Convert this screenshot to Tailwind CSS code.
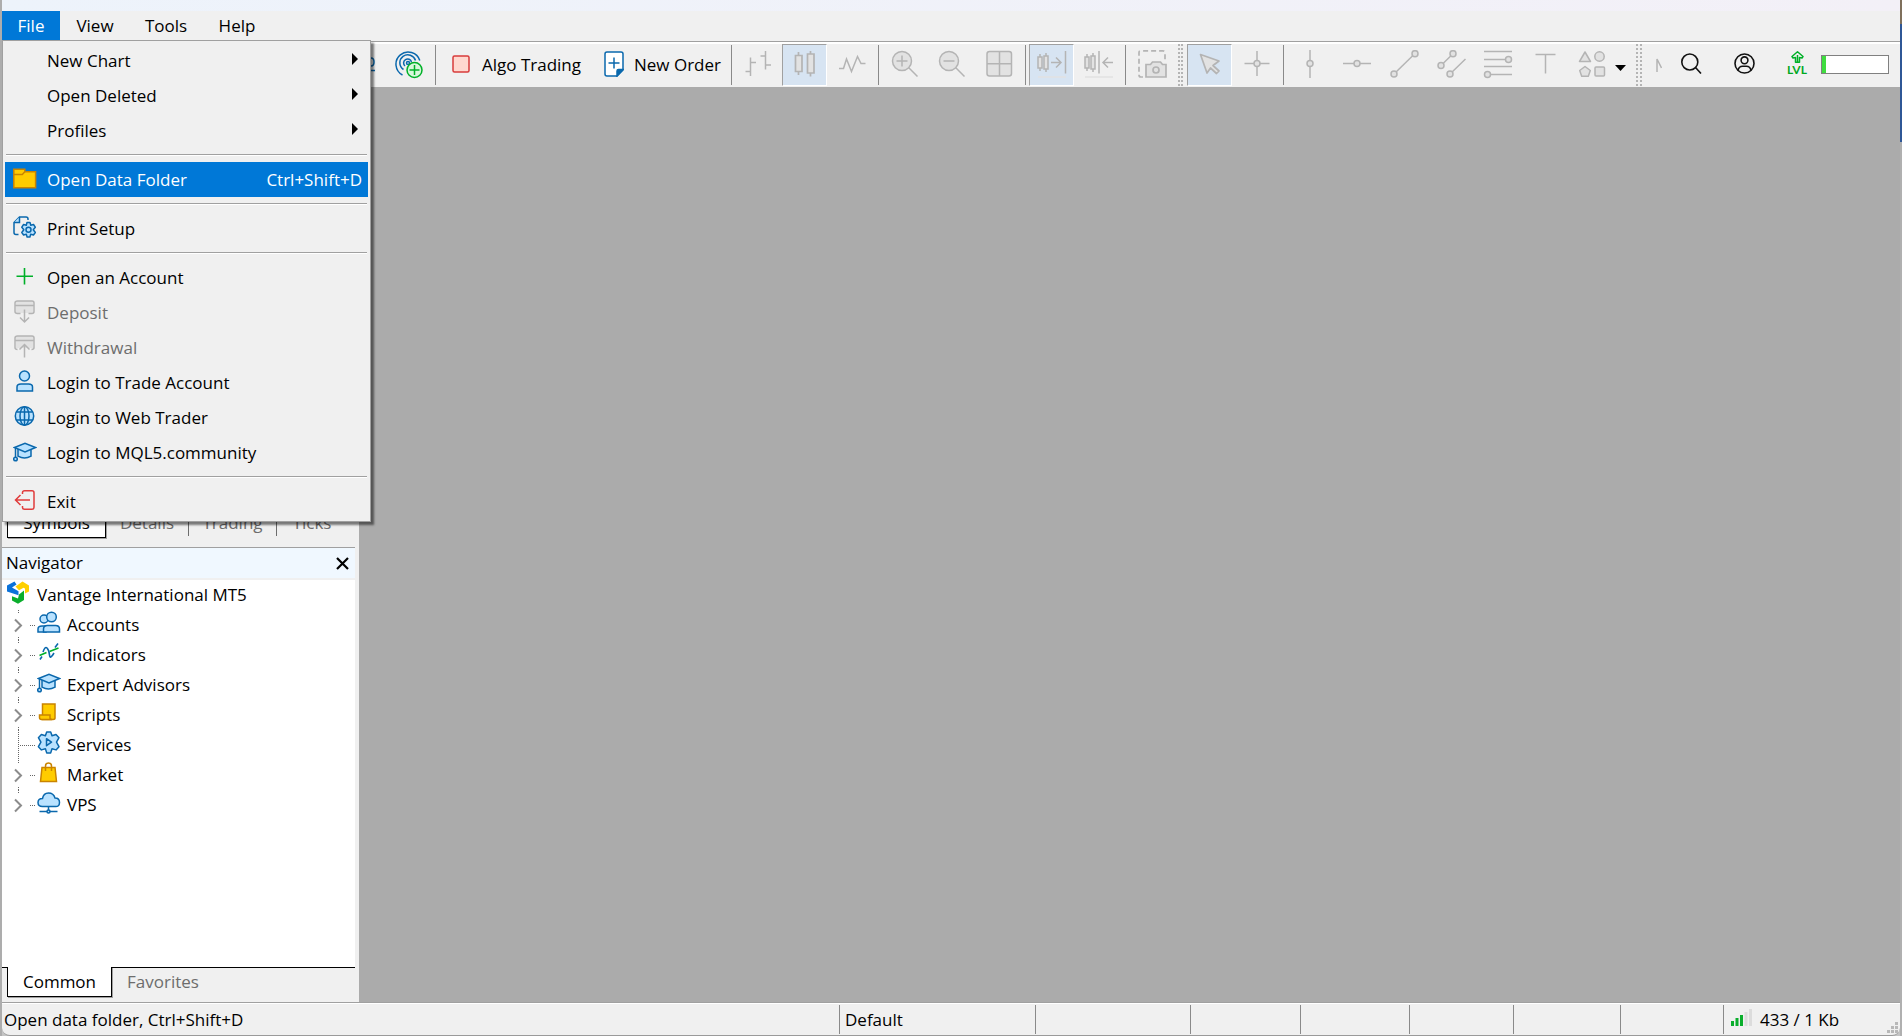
<!DOCTYPE html>
<html lang="en">
<head>
    <meta charset="UTF-8">
    <meta name="viewport" content="width=device-width, initial-scale=1.0">
    <title>Vantage International MT5</title>
    <script src="https://cdn.jsdelivr.net/npm/@tailwindcss/browser@4"></script>
    <style>
        body {
            font-family: 'Open Sans', 'Noto Sans', sans-serif;
        }
    </style>
</head>
<body class="relative flex h-screen flex-col overflow-hidden bg-[#c4c4c4] pl-[2px] pr-[2px] text-[17px] leading-6 text-black">
    <!-- desktop visible past the window edges -->
    <div class="absolute inset-y-0 left-0 w-[2px] bg-[#adadad]"></div>
    <div class="absolute inset-y-0 right-0 flex w-[2px] flex-col bg-[#b0b0b0]">
        <div class="h-6 bg-[#7f705c]"></div>
        <div class="h-[118px] bg-[#2f5796]"></div>
    </div>

    <div class="relative flex min-h-0 flex-1 flex-col overflow-hidden rounded-b-lg border-b border-[#9a9a9a] bg-[#f0f0f0]">
        <div class="h-[11px] shrink-0 bg-linear-to-r from-[#edf3fb] to-[#f3f0f7]"></div>

        <!-- Menu bar -->
        <nav class="relative z-20 flex h-[30px] shrink-0">
            <button class="h-[29px] w-[58px] bg-[#0078d7] pt-px text-white">File</button>
            <button class="h-[29px] w-[70px] pt-px">View</button>
            <button class="h-[29px] w-[72px] pt-px">Tools</button>
            <button class="h-[29px] w-[70px] pt-px">Help</button>

            <!-- File menu -->
            <div role="menu" class="absolute left-0 top-[29px] w-[369px] border border-[#a0a0a0] bg-[#f0f0f0] p-[2px] shadow-[3px_3px_2px_rgba(0,0,0,0.5)]">
                <button role="menuitem" class="flex h-[35px] w-full items-center pl-[42px] pr-[10px]">
                    <span class="flex-1 pt-px text-left">New Chart</span>
                    <svg class="mb-1 h-3 w-[6px]" viewBox="0 0 6 12"><path d="M0 0l6 6-6 6z"/></svg>
                </button>
                <button role="menuitem" class="flex h-[35px] w-full items-center pl-[42px] pr-[10px]">
                    <span class="flex-1 pt-px text-left">Open Deleted</span>
                    <svg class="mb-1 h-3 w-[6px]" viewBox="0 0 6 12"><path d="M0 0l6 6-6 6z"/></svg>
                </button>
                <button role="menuitem" class="flex h-[35px] w-full items-center pl-[42px] pr-[10px]">
                    <span class="flex-1 pt-px text-left">Profiles</span>
                    <svg class="mb-1 h-3 w-[6px]" viewBox="0 0 6 12"><path d="M0 0l6 6-6 6z"/></svg>
                </button>
                <div class="mx-px mb-[6px] mt-[6px] h-[2px] border-b border-t border-b-white border-t-[#a0a0a0]"></div>
                <button role="menuitem" class="flex h-[35px] w-full items-center gap-[10px] bg-[#0078d7] pl-2 pr-[6px] text-white">
                    <svg class="mb-[2px] size-6" viewBox="0 0 24 24" fill="#ffcc00" stroke="#c98400" stroke-width="1.5"><path d="M.8 2.2h11v2.6h10.8v15.9H.8z"/><path d="M.8 7.5h8.5l2.5-2.7"/></svg>
                    <span class="flex-1 pt-px text-left">Open Data Folder</span>
                    <span class="pt-px">Ctrl+Shift+D</span>
                </button>
                <div class="mx-px mb-[6px] mt-[6px] h-[2px] border-b border-t border-b-white border-t-[#a0a0a0]"></div>
                <button role="menuitem" class="flex h-[35px] w-full items-center gap-[10px] pl-2">
                    <svg class="mb-[2px] size-6" viewBox="0 0 24 24" fill="none" stroke="#0a68ad" stroke-width="1.5"><path d="M5.500 18.500H3Q1 18.500 1 16.500V6.500L6.500 1H13q2 0 2 2v1"/><path d="M1 6.500h5.500V1" fill="#b9e2ff"/><path fill="#b9e2ff" stroke-linejoin="round" d="M14 6.500h3l.8 2.700 2.700-.7 1.800 2.700-2 2.500 2 2.800-1.800 2.500-2.800-.7-.8 2.700h-2.800l-.8-2.700-2.700.7-1.800-2.500 2-2.800-2-2.500 1.800-2.700 2.700.7z"/><circle cx="15.500" cy="13.800" r="2.500"/></svg>
                    <span class="pt-px">Print Setup</span>
                </button>
                <div class="mx-px mb-[6px] mt-[6px] h-[2px] border-b border-t border-b-white border-t-[#a0a0a0]"></div>
                <button role="menuitem" class="flex h-[35px] w-full items-center gap-[10px] pl-2">
                    <svg class="mb-[2px] size-6" viewBox="0 0 24 24" stroke="#00b028" stroke-width="1.6"><path d="M11.500 3v16.500M3.500 11.200h16.500"/></svg>
                    <span class="pt-px">Open an Account</span>
                </button>
                <button role="menuitem" disabled class="flex h-[35px] w-full items-center gap-[10px] pl-2 text-[#6d6d6d]">
                    <svg class="mb-[2px] size-6" viewBox="0 0 24 24" fill="none" stroke="#b4b4b4" stroke-width="1.500"><path fill="#e2e2e2" stroke="none" d="M3 1h17v12H3z"/><path d="M7.500 13.500H4.500Q2 13.500 2 11.500V3Q2 1 4.500 1h14.500q2 0 2 2v8.500q0 2-2 2h-3.500M2 5.500h19M11.500 9.500V22M7 17.500l4.500 4.500 4.500-4.500"/></svg>
                    <span class="pt-px">Deposit</span>
                </button>
                <button role="menuitem" disabled class="flex h-[35px] w-full items-center gap-[10px] pl-2 text-[#6d6d6d]">
                    <svg class="mb-[2px] size-6" viewBox="0 0 24 24" fill="none" stroke="#b4b4b4" stroke-width="1.500"><path fill="#e2e2e2" stroke="none" d="M3 1h17v12H3z"/><path d="M4.500 14.500Q2 14.500 2 12.500V3Q2 1 4.500 1h14.500q2 0 2 2v9.500q0 2-2.500 2M2 5.500h19M11.500 9.500V22.500M6.500 14.500l5-5 5 5"/></svg>
                    <span class="pt-px">Withdrawal</span>
                </button>
                <button role="menuitem" class="flex h-[35px] w-full items-center gap-[10px] pl-2">
                    <svg class="mb-[2px] size-6" viewBox="0 0 24 24" fill="#b9e2ff" stroke="#0a68ad" stroke-width="1.500"><circle cx="11.500" cy="6" r="5"/><path d="M4 21v-4q0-3 4-3h7.500q4 0 4 3v4z"/></svg>
                    <span class="pt-px">Login to Trade Account</span>
                </button>
                <button role="menuitem" class="flex h-[35px] w-full items-center gap-[10px] pl-2">
                    <svg class="mb-[2px] size-6" viewBox="0 0 24 24" fill="none" stroke="#0a68ad" stroke-width="1.500"><circle cx="11.500" cy="11" r="9.200" fill="#b9e2ff"/><ellipse cx="11.500" cy="11" rx="4.500" ry="9.200"/><path d="M11.500 2v18M3.500 7h16M3.500 15h16"/></svg>
                    <span class="pt-px">Login to Web Trader</span>
                </button>
                <button role="menuitem" class="flex h-[35px] w-full items-center gap-[10px] pl-2">
                    <svg class="mb-[2px] size-6" viewBox="0 0 24 24" fill="#b9e2ff" stroke="#0a68ad" stroke-width="1.500"><path d="M5 8v8.200q6.500 3.500 13 0V8"/><path d="M1.500 7.500L12 3.200l10.500 4.300L12 12z"/><path d="M2.500 8v9" fill="none"/><circle cx="2.500" cy="19" r="1.800"/></svg>
                    <span class="pt-px">Login to MQL5.community</span>
                </button>
                <div class="mx-px mb-[6px] mt-[6px] h-[2px] border-b border-t border-b-white border-t-[#a0a0a0]"></div>
                <button role="menuitem" class="flex h-[35px] w-full items-center gap-[10px] pl-2">
                    <svg class="mb-[2px] size-6" viewBox="0 0 24 24" fill="none" stroke="#e03c3c" stroke-width="1.500"><path d="M9.500 5V3.500Q9.500 1.800 11.500 1.800H19q2 0 2 2v14.500q0 2-2 2h-7.500q-2 0-2-1.700v-1.500M17 11H3M7.500 6l-5 5 5 5"/></svg>
                    <span class="pt-px">Exit</span>
                </button>
            </div>
        </nav>

        <!-- Toolbar -->
        <div class="relative flex h-[46px] shrink-0 items-center border-t border-[#a0a0a0] pl-[369px] shadow-[inset_0_2px_0_#ffffff]">
            <svg class="h-[30px] w-1" viewBox="0 0 4 30" fill="none" stroke="#0a68ad" stroke-width="1.500"><path d="M0 8q3 0 3 4t-3 4M0 20.500h4"/></svg>
            <button aria-label="Signals" class="ml-[10px] flex h-[42px] w-[47px] items-center justify-center pl-px">
                <svg class="size-[30px]" viewBox="0 0 30 30" fill="none" stroke="#0a68ad" stroke-width="1.500"><path d="M8.500 25A12.200 12.200 0 1 1 25.800 10.500M9.500 19.500A8 8 0 1 1 21.500 10.500M11 16A4 4 0 1 1 17.500 12"/><circle cx="14" cy="13" r="1.500"/><circle cx="20.500" cy="20" r="7.500" stroke="#00b028" fill="#d8f8dc"/><path stroke="#00b028" d="M20.500 15v10M15.500 20h10"/></svg>
            </button>
            <div class="ml-[3px] mr-2 h-10 w-px bg-[#8a8a8a]"></div>
            <button class="flex h-[42px] items-center gap-3 px-2">
                <svg class="mb-[2px] size-[18px]" viewBox="0 0 18 18"><rect x="1" y="1" width="16" height="16" rx="1.500" fill="#ffd8cf" stroke="#d83b3b" stroke-width="1.500"/></svg>
                <span class="w-[102px] whitespace-nowrap pt-px text-left">Algo Trading</span>
            </button>
            <button class="ml-3 flex h-[42px] items-center gap-[10px]">
                <svg class="mb-[2px] h-[26px] w-5" viewBox="0 0 20 26" fill="#fff" stroke="#0a68ad" stroke-width="1.500"><path d="M3 1h14q2 0 2 2v16l-6 6H3q-2 0-2-2V3q0-2 2-2z"/><path d="M19 18.500h-4.500q-1.500 0-1.500 1.500v5z" fill="#0a68ad"/><path d="M10 6.500v11M4.500 12h11"/></svg>
                <span class="w-[88px] whitespace-nowrap pt-px text-left">New Order</span>
            </button>
            <div class="ml-[9px] mr-[2px] h-10 w-px shrink-0 bg-[#8a8a8a]"></div>

            <button aria-label="Bar chart" class="flex h-[42px] w-[47px] shrink-0 items-center justify-center">
                <svg class="size-[30px]" viewBox="0 0 30 30" fill="none" stroke="#b4b4b4" stroke-width="1.500"><path d="M7.500 7.500V26M7.500 12.500H13M2.500 21.500h5M22.500 1v18.500M17.500 6h5M22.500 15h5.500"/></svg>
            </button>
            <button aria-label="Candlesticks" aria-pressed="true" class="mx-px flex h-[42px] w-[45px] shrink-0 items-center justify-center border border-b-white border-l-[#a0a0a0] border-r-white border-t-[#a0a0a0] bg-[#d7e4f2]">
                <svg class="size-[30px]" viewBox="0 0 30 30" fill="#e2e2e2" stroke="#b4b4b4" stroke-width="1.700"><path d="M8.500 2v4M8.500 21v4M20.500 1v3M20.500 23v3.500"/><path d="M5.500 5.500h6.500v16H5.500zM17.500 4h6.500v19h-6.500z"/></svg>
            </button>
            <button aria-label="Line chart" class="flex h-[42px] w-[47px] shrink-0 items-center justify-center">
                <svg class="size-[30px]" viewBox="0 0 30 30" fill="none" stroke="#b4b4b4" stroke-width="1.500"><path d="M2 18.500h4.500L9.500 9l5 12.500 6-15 3.500 7h4.500"/></svg>
            </button>
            <div class="ml-[3px] mr-[2px] h-10 w-px shrink-0 bg-[#8a8a8a]"></div>
            <button aria-label="Zoom in" class="flex h-[42px] w-[47px] shrink-0 items-center justify-center">
                <svg class="size-[30px]" viewBox="0 0 30 30" fill="#e2e2e2" stroke="#b4b4b4" stroke-width="1.500"><circle cx="12" cy="11" r="9.500"/><path d="M12 5.500v11M6.500 11h11M18.800 17.800l8.700 8.700"/></svg>
            </button>
            <button aria-label="Zoom out" class="flex h-[42px] w-[47px] shrink-0 items-center justify-center">
                <svg class="size-[30px]" viewBox="0 0 30 30" fill="#e2e2e2" stroke="#b4b4b4" stroke-width="1.500"><circle cx="12" cy="11" r="9.500"/><path d="M6.500 11h11M18.800 17.800l8.700 8.700"/></svg>
            </button>
            <button aria-label="Tile windows" class="flex h-[42px] w-[47px] shrink-0 items-center justify-center">
                <svg class="size-[30px]" viewBox="0 0 30 30" fill="#e2e2e2" stroke="#b4b4b4" stroke-width="1.500"><rect x="3" y="1.500" width="24.500" height="24.500" rx="2.500"/><path d="M15.500 1.500V26M3 13.800h24.500"/></svg>
            </button>
            <div class="ml-[3px] mr-[2px] h-10 w-px shrink-0 bg-[#8a8a8a]"></div>
            <button aria-label="Auto scroll" aria-pressed="true" class="mx-px flex h-[42px] w-[45px] shrink-0 items-center justify-center border border-b-white border-l-[#a0a0a0] border-r-white border-t-[#a0a0a0] bg-[#d7e4f2]">
                <svg class="size-[30px]" viewBox="0 0 30 30" fill="none" stroke="#b4b4b4" stroke-width="1.500"><path fill="#e2e2e2" d="M1 7h4v11H1zM7 6h4v13H7z"/><path d="M3 4v3M3 18v3M9 3v3M9 19v3M14 12.500h10M19 7.500l5 5-5 5M28.500 1v22.500"/><path stroke="#e2e2e2" d="M1 27h28"/></svg>
            </button>
            <button aria-label="Chart shift" class="flex h-[42px] w-[47px] shrink-0 items-center justify-center">
                <svg class="size-[30px]" viewBox="0 0 30 30" fill="none" stroke="#b4b4b4" stroke-width="1.500"><path fill="#e2e2e2" d="M1 7h4v11H1zM7 6h4v13H7z"/><path d="M3 4v3M3 18v3M9 3v3M9 19v3M19 12.500h10M24 7.500l-5 5 5 5M15 1v22.500"/><path stroke="#e2e2e2" d="M1 27h28"/></svg>
            </button>
            <div class="ml-[3px] mr-[2px] h-10 w-px shrink-0 bg-[#8a8a8a]"></div>
            <button aria-label="Screenshot" class="flex h-[42px] w-[47px] shrink-0 items-center justify-center">
                <svg class="size-[30px]" viewBox="0 0 30 30" fill="none" stroke="#b4b4b4" stroke-width="1.700"><path stroke-dasharray="5 3" d="M6 27H4q-2 0-2-2V2.500Q2 .9 4 .9h22q2 0 2 2V10"/><path fill="#e2e2e2" d="M10.500 14.500h3l2-2.500h8l2 2.500h3.500V27H9V14.500z"/><circle cx="19" cy="20" r="3"/></svg>
            </button>
            <div class="mx-[3px] h-[42px] w-[5px] shrink-0 border-x-2 border-dotted border-[#b4b4b4]"></div>
            <button aria-label="Cursor" aria-pressed="true" class="mx-px flex h-[42px] w-[45px] shrink-0 items-center justify-center border border-b-white border-l-[#a0a0a0] border-r-white border-t-[#a0a0a0] bg-[#d7e4f2]">
                <svg class="size-[30px]" viewBox="0 0 30 30" fill="#e2e2e2" stroke="#b4b4b4" stroke-width="1.700" stroke-linejoin="round"><path d="M5.500 4.500l18.500 6.500-6 4.500 6 5.500-2.500 2.500-6-5.500-3.500 5z"/></svg>
            </button>
            <button aria-label="Crosshair" class="flex h-[42px] w-[47px] shrink-0 items-center justify-center">
                <svg class="size-[30px]" viewBox="0 0 30 30" fill="#e2e2e2" stroke="#b4b4b4" stroke-width="1.500"><path d="M15 1v25M2.500 13.500h25"/><circle cx="15" cy="13.500" r="3"/></svg>
            </button>
            <div class="ml-[3px] mr-[2px] h-10 w-px shrink-0 bg-[#8a8a8a]"></div>
            <button aria-label="Vertical line" class="flex h-[42px] w-[47px] shrink-0 items-center justify-center">
                <svg class="size-[30px]" viewBox="0 0 30 30" fill="#e2e2e2" stroke="#b4b4b4" stroke-width="1.500"><path d="M15 0v28"/><circle cx="15" cy="13.500" r="3"/></svg>
            </button>
            <button aria-label="Horizontal line" class="flex h-[42px] w-[47px] shrink-0 items-center justify-center">
                <svg class="size-[30px]" viewBox="0 0 30 30" fill="#e2e2e2" stroke="#b4b4b4" stroke-width="1.500"><path d="M1 13.500h28"/><circle cx="15" cy="13.500" r="3"/></svg>
            </button>
            <button aria-label="Trendline" class="flex h-[42px] w-[47px] shrink-0 items-center justify-center">
                <svg class="size-[30px]" viewBox="0 0 30 30" fill="#e2e2e2" stroke="#b4b4b4" stroke-width="1.500"><path d="M5 24L26 3.500"/><circle cx="5" cy="24" r="3"/><circle cx="26" cy="3.700" r="3"/></svg>
            </button>
            <button aria-label="Equidistant channel" class="flex h-[42px] w-[47px] shrink-0 items-center justify-center">
                <svg class="size-[30px]" viewBox="0 0 30 30" fill="#e2e2e2" stroke="#b4b4b4" stroke-width="1.500"><path d="M5 15.500L17 3.700M14 24L29.500 9"/><circle cx="5" cy="15.500" r="3"/><circle cx="17" cy="3.700" r="3"/><circle cx="14" cy="24" r="3"/></svg>
            </button>
            <button aria-label="Fibonacci" class="flex h-[42px] w-[47px] shrink-0 items-center justify-center">
                <svg class="size-[30px]" viewBox="0 0 30 30" fill="#e2e2e2" stroke="#b4b4b4" stroke-width="1.500"><path d="M1 1.500h28M1 9.500h28M1 16.500h28M1 24.500h28"/><circle cx="25.500" cy="9.500" r="3"/><circle cx="4.500" cy="24.500" r="3"/></svg>
            </button>
            <button aria-label="Text" class="flex h-[42px] w-[47px] shrink-0 items-center justify-center">
                <svg class="size-[30px]" viewBox="0 0 30 30" fill="none" stroke="#b4b4b4" stroke-width="1.500"><path d="M5.500 4.500h20M15.500 4.500v19"/></svg>
            </button>
            <button aria-label="Objects" class="flex h-[42px] w-[47px] shrink-0 items-center justify-center">
                <svg class="size-[30px]" viewBox="0 0 30 30" fill="#e2e2e2" stroke="#b4b4b4" stroke-width="1.500" stroke-linejoin="round"><path d="M8 2l5.500 9.500h-11z"/><circle cx="22.500" cy="6.500" r="4.700"/><path d="M8 16.500l5.300 4-2 5.800H4.700l-2-5.800z"/><rect x="18" y="17" width="9.500" height="9" rx="1"/></svg>
            </button>
            <button aria-label="More objects" class="mt-[6px] flex w-4 shrink-0">
                <svg class="h-[6px] w-[11px]" viewBox="0 0 11 6"><path d="M0 0h11L5.500 6z"/></svg>
            </button>
            <div class="ml-[5px] h-[42px] w-[6px] shrink-0 border-x-2 border-dotted border-[#b4b4b4]"></div>
            <svg class="ml-[14px] h-[14px] w-[6px] shrink-0" viewBox="0 0 6 14" fill="none" stroke="#b4b4b4" stroke-width="1.500"><path d="M1 14V1l4.500 9"/></svg>

            <div class="ml-auto flex shrink-0 items-center pr-[11px]">
                <button aria-label="Search" class="mb-[2px] mr-8 size-[21px]">
                    <svg class="size-[21px]" viewBox="0 0 21 21" fill="none" stroke="#111" stroke-width="1.600"><circle cx="8.800" cy="9" r="8"/><path d="M14.500 14.500l5.500 6"/></svg>
                </button>
                <button aria-label="Account" class="mb-[2px] mr-8 size-[21px]">
                    <svg class="size-[21px]" viewBox="0 0 21 21" fill="none" stroke="#111" stroke-width="1.600"><circle cx="10.500" cy="10.500" r="9.500"/><circle cx="10.500" cy="7.300" r="3.400"/><path d="M4 17.200q1-4 4.500-4h4q3.500 0 4.500 4"/></svg>
                </button>
                <button aria-label="Connection level" class="mb-[2px] mr-[14px] flex w-5 flex-col items-center text-[#00a91f]">
                    <svg class="h-3 w-[13px]" viewBox="0 0 13 12" fill="none" stroke="#00b028" stroke-width="1.500" stroke-linejoin="round"><path d="M4.500 6.500L2 7 1 5.500 6.500.8 12 5.500 11 7l-2.500-.5v4.700h-4zM6.500 4v7"/></svg>
                    <span class="font-['Lato'] text-[12px] font-bold leading-[13px]">LVL</span>
                </button>
                <div class="h-[19px] w-[68px] border border-[#808080] bg-white"><div class="h-full w-1 bg-[#3fdc3f]"></div></div>
            </div>
        </div>

        <!-- Workspace -->
        <div class="flex min-h-0 flex-1">
            <aside class="flex w-[357px] shrink-0 flex-col pr-1">
                <!-- Market Watch -->
                <section class="flex h-[460px] shrink-0 flex-col">
                    <div class="flex-1 border-b border-black bg-white"></div>
                    <div class="mb-[9px] flex h-[30px] pl-[5px] text-[#6d6d6d]">
                        <button class="w-[99px] border border-t-0 border-black bg-white text-black shadow-[1px_1px_0_#a0a0a0]">Symbols</button>
                        <button class="my-[2px] w-[83px] border-r border-[#6d6d6d]">Details</button>
                        <button class="my-[2px] w-[88px] border-r border-[#6d6d6d]">Trading</button>
                        <button class="my-[2px] w-[70px]">Ticks</button>
                    </div>
                </section>

                <!-- Navigator -->
                <section class="flex min-h-0 flex-1 flex-col border-t border-[#a0a0a0]">
                    <header class="flex h-[30px] shrink-0 items-center justify-between bg-[#f0f8ff] pl-1 pr-[6px]">
                        <h2>Navigator</h2>
                        <button aria-label="Close" class="size-[13px]">
                            <svg class="size-[13px]" viewBox="0 0 13 13" stroke="#000" stroke-width="2.200"><path d="M1 1l11 11M12 1L1 12"/></svg>
                        </button>
                    </header>
                    <div class="mt-[2px] min-h-0 flex-1 overflow-hidden bg-white">
                        <div class="flex h-[30px] items-center gap-[6px] pl-[5px]">
                            <svg class="mb-1 h-6 w-[22px]" viewBox="0 0 22 24"><path fill="#0b72d9" d="M0 4.500L7.500.5l2 3L5 6.500l6.500 3.800v3.900L0 10.500z"/><path fill="#ffd000" d="M8.500 5.500L15.500.5 22 4.500v6L18 12.500V7.500l-1.500-.7-4.500 2.500z"/><path fill="#0aae2c" d="M12 13.500l5-4v9.500l-6 3.800-6-3.300v-4.300l6 2.300z"/></svg>
                            <span class="pl-[2px]">Vantage International MT5</span>
                        </div>
                        <ul>
                            <li class="flex h-[30px] items-center">
                                <svg class="h-[30px] w-[35px]" viewBox="0 0 35 30" fill="none"><path stroke="#666" stroke-dasharray="1 1" d="M16.500 0v3M16.500 27v3M28 15.500h6"/><path stroke="#8c8c8c" stroke-width="2" d="M13 9.500l6 6-6 6"/></svg>
                                <svg class="mb-1 size-6" viewBox="0 0 24 24" fill="#b9e2ff" stroke="#0a68ad" stroke-width="1.500"><circle cx="7" cy="8" r="4"/><path d="M1 21v-3q0-3 4-3h4v6z"/><circle cx="14.500" cy="6" r="4.800"/><path d="M6.500 21v-3q0-3.500 4-3.500h8q4 0 4 3.500v3z"/></svg>
                                <span class="pl-[6px]">Accounts</span>
                            </li>
                            <li class="flex h-[30px] items-center">
                                <svg class="h-[30px] w-[35px]" viewBox="0 0 35 30" fill="none"><path stroke="#666" stroke-dasharray="1 1" d="M16.500 0v3M16.500 27v3M28 15.500h6"/><path stroke="#8c8c8c" stroke-width="2" d="M13 9.500l6 6-6 6"/></svg>
                                <svg class="mb-1 size-6" viewBox="0 0 24 24" fill="none" stroke-width="1.600"><path stroke="#00b028" d="M2.500 14.500l7-3M12.500 10.500l9-3.500"/><path stroke="#0a68ad" d="M3 18.500l2-3M6 11q2-6 4-4t2.500 7 4.500-2M18 6.500l3-4"/></svg>
                                <span class="pl-[6px]">Indicators</span>
                            </li>
                            <li class="flex h-[30px] items-center">
                                <svg class="h-[30px] w-[35px]" viewBox="0 0 35 30" fill="none"><path stroke="#666" stroke-dasharray="1 1" d="M16.500 0v3M16.500 27v3M28 15.500h6"/><path stroke="#8c8c8c" stroke-width="2" d="M13 9.500l6 6-6 6"/></svg>
                                <svg class="mb-1 size-6" viewBox="0 0 24 24" fill="#b9e2ff" stroke="#0a68ad" stroke-width="1.500"><path d="M5 8v8.200q6.500 3.500 13 0V8"/><path d="M1.500 7.500L12 3.200l10.500 4.300L12 12z"/><path d="M2.500 8v9" fill="none"/><circle cx="2.500" cy="19" r="1.800"/></svg>
                                <span class="pl-[6px]">Expert Advisors</span>
                            </li>
                            <li class="flex h-[30px] items-center">
                                <svg class="h-[30px] w-[35px]" viewBox="0 0 35 30" fill="none"><path stroke="#666" stroke-dasharray="1 1" d="M16.500 0v3M16.500 27v3M28 15.500h6"/><path stroke="#8c8c8c" stroke-width="2" d="M13 9.500l6 6-6 6"/></svg>
                                <svg class="mb-1 size-6" viewBox="0 0 24 24" fill="#ffcc00" stroke="#c98400" stroke-width="1.500"><path d="M5.500 3h12.500v14q0 1.500-2 1.500H5.500z"/><path d="M2.500 14h10.500v3q0 1.500 2 1.500H4.500q-2 0-2-2z"/></svg>
                                <span class="pl-[6px]">Scripts</span>
                            </li>
                            <li class="flex h-[30px] items-center">
                                <svg class="h-[30px] w-[35px]" viewBox="0 0 35 30" fill="none"><path stroke="#666" stroke-dasharray="1 1" d="M16.500 0v30M18 15.500h16"/></svg>
                                <svg class="mb-1 size-6" viewBox="0 0 24 24" fill="#b9e2ff" stroke="#0a68ad" stroke-width="1.500" stroke-linejoin="round"><path d="M9.700 1h4l1.300 3.800 4-1.300 3 3.200-2.500 4.500 2.500 4.500-3 3.200-4-1.200-1.300 4.200h-4l-1.300-4.200-4 1.200-3-3.200 2.500-4.500-2.500-4.500 3-3.200 4 1.300z"/><path d="M9.500 7.700l5 3.500-5 3.500z"/></svg>
                                <span class="pl-[6px]">Services</span>
                            </li>
                            <li class="flex h-[30px] items-center">
                                <svg class="h-[30px] w-[35px]" viewBox="0 0 35 30" fill="none"><path stroke="#666" stroke-dasharray="1 1" d="M16.500 0v3M16.500 27v3M28 15.500h6"/><path stroke="#8c8c8c" stroke-width="2" d="M13 9.500l6 6-6 6"/></svg>
                                <svg class="mb-1 size-6" viewBox="0 0 24 24" fill="#ffcc00" stroke="#c98400" stroke-width="1.500"><path d="M5 6.500h13l1.500 14h-16z"/><path fill="none" d="M8.500 10V5q0-3 3-3t3 3v5"/></svg>
                                <span class="pl-[6px]">Market</span>
                            </li>
                            <li class="flex h-[30px] items-center">
                                <svg class="h-[30px] w-[35px]" viewBox="0 0 35 30" fill="none"><path stroke="#666" stroke-dasharray="1 1" d="M16.500 0v3M28 15.500h6"/><path stroke="#8c8c8c" stroke-width="2" d="M13 9.500l6 6-6 6"/></svg>
                                <svg class="mb-1 size-6" viewBox="0 0 24 24" fill="#b9e2ff" stroke="#0a68ad" stroke-width="1.500"><path d="M5.500 15.500q-4.500 0-4.500-4t4.500-4q1-5.500 6-5.500t6.500 5q4.500 0 4.500 4.500t-4.500 4z"/><path d="M11.500 15.500v4M2.500 20.500h18"/><circle cx="11.500" cy="20.500" r="1.500"/></svg>
                                <span class="pl-[6px]">VPS</span>
                            </li>
                        </ul>
                    </div>
                    <div class="mb-[5px] flex h-[30px] shrink-0">
                        <div class="w-[5px] border-t border-black"></div>
                        <button class="w-[105px] border border-t-0 border-black bg-white shadow-[1px_1px_0_#a0a0a0]">Common</button>
                        <div class="flex-1 border-t border-black pl-[15px] text-[#6d6d6d]"><button class="h-7">Favorites</button></div>
                    </div>
                </section>
            </aside>
            <main class="flex-1 bg-[#ababab]"></main>
        </div>

        <!-- Status bar -->
        <footer class="relative flex h-[33px] shrink-0 items-stretch border-t border-[#a0a0a0] pb-px pt-[2px] leading-[30px] shadow-[inset_0_1px_0_#ffffff]">
            <div class="flex-1 pl-[2px]">Open data folder, Ctrl+Shift+D</div>
            <div class="w-[196px] border-l border-[#8a8a8a] pl-[5px]">Default</div>
            <div class="w-[155px] border-l border-[#8a8a8a]"></div>
            <div class="w-[110px] border-l border-[#8a8a8a]"></div>
            <div class="w-[109px] border-l border-[#8a8a8a]"></div>
            <div class="w-[104px] border-l border-[#8a8a8a]"></div>
            <div class="w-[107px] border-l border-[#8a8a8a]"></div>
            <div class="w-[103px] border-l border-[#8a8a8a]"></div>
            <div class="flex w-[177px] items-center gap-2 border-l border-[#8a8a8a] pl-[7px]">
                <svg class="mb-1 h-[17px] w-[21px]" viewBox="0 0 21 17"><path fill="#0aae2c" d="M0 12h3v5H0zM4.500 9h3v8h-3zM9 6h3v11H9z"/><path fill="#dcdcdc" d="M13.500 3h3v14h-3zM18 0h3v17h-3z"/></svg>
                <span>433 / 1 Kb</span>
            </div>
            <svg class="absolute bottom-[2px] right-[2px] size-[11px]" viewBox="0 0 11 11" fill="#b8b8b8"><path d="M8 0h3v3H8zM4 4h3v3H4zM8 4h3v3H8zM0 8h3v3H0zM4 8h3v3H4zM8 8h3v3H8z"/></svg>
        </footer>
    </div>
</body>
</html>
